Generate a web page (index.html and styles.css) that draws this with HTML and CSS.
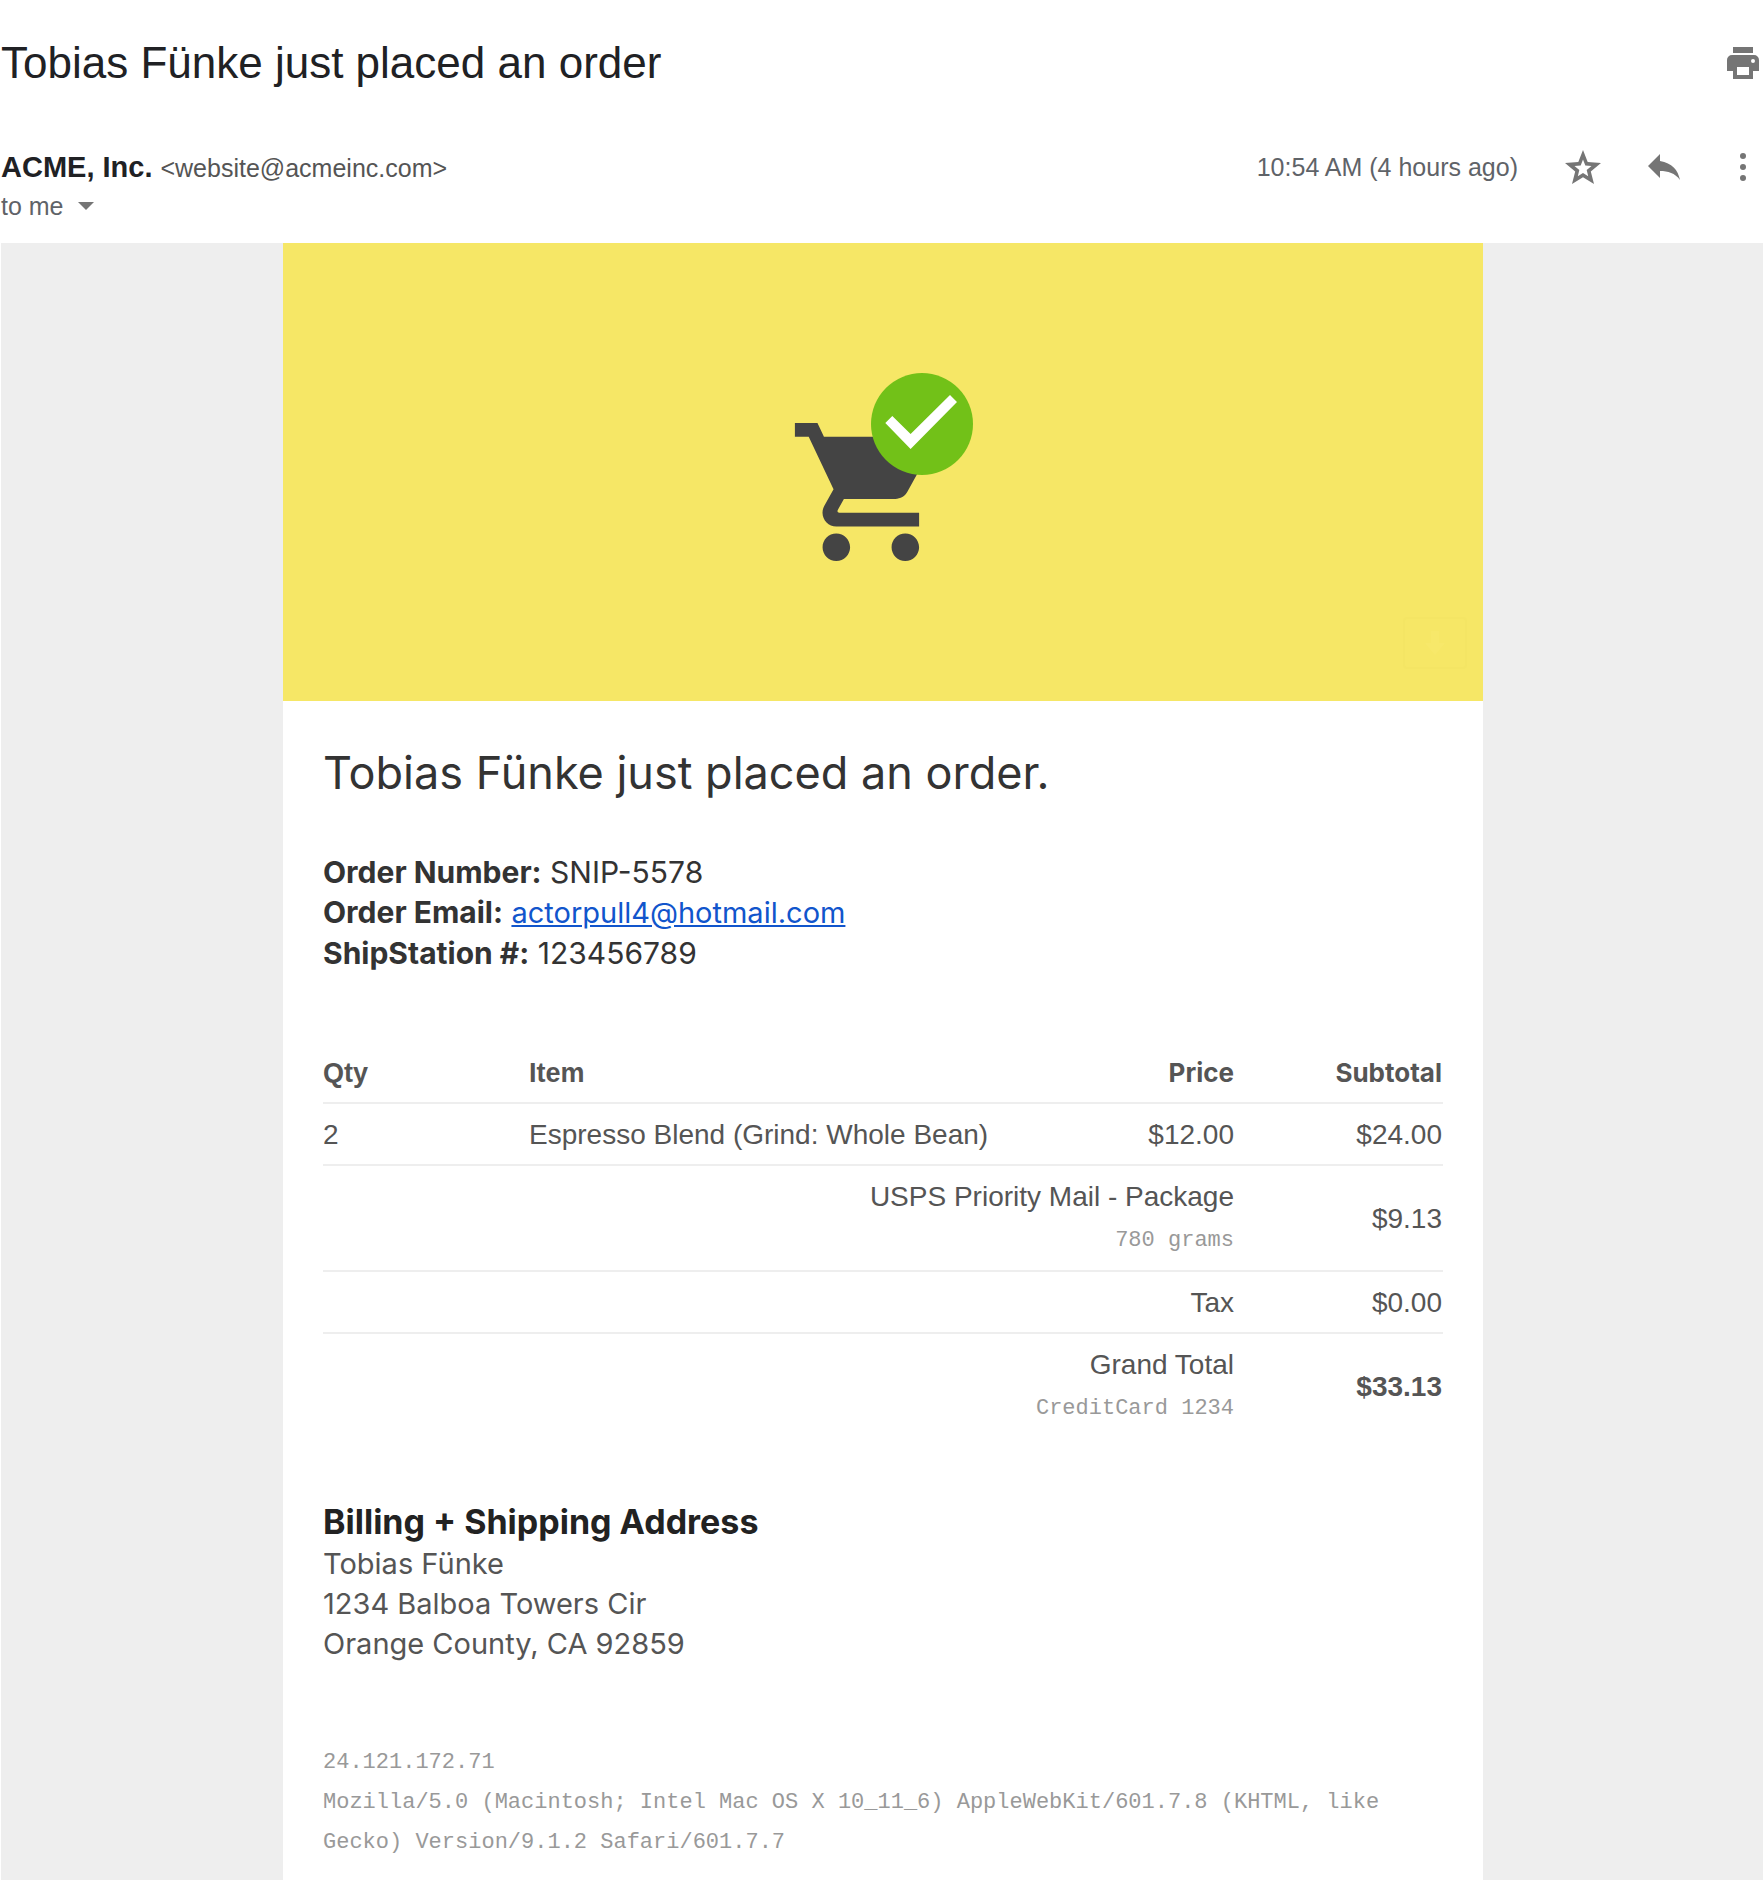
FILE: index.html
```html
<!DOCTYPE html>
<html lang="en">
<head>
<meta charset="utf-8">
<meta name="viewport" content="width=device-width, initial-scale=1">
<title>Tobias Fünke just placed an order</title>
<link rel="stylesheet" href="styles.css">
</head>
<body>
<header class="message-header">
  <div class="subject-row">
    <h1 class="subject">Tobias Fünke just placed an order</h1>
    <button class="icon-button" type="button" aria-label="Print">
      <svg width="32" height="32" viewBox="0 0 32 32" aria-hidden="true"><path fill-rule="evenodd" d="M6 0h20v6H6zM5 8h22a5 5 0 0 1 5 5v11h-6v8H6v-8H0V13a5 5 0 0 1 5-5zm5 12v8h12v-8zM26 12a2 2 0 1 0 0 4 2 2 0 0 0 0-4z"/></svg>
    </button>
  </div>
  <div class="meta-row">
    <div class="sender">
      <span class="sender-name">ACME, Inc.</span>
      <span class="sender-email">&lt;website@acmeinc.com&gt;</span>
    </div>
    <div class="actions">
      <time class="sent-at">10:54 AM (4 hours ago)</time>
      <button class="icon-button" type="button" aria-label="Star">
        <svg width="36" height="34" viewBox="0 0 36 34" aria-hidden="true"><path fill-rule="evenodd" d="M18 0l4.7 12L36 13l-10.2 8.400L29 34l-11-6.800L7 34l3.200-12.600L0 13l13.300-1zM18 9.500l-2.300 6-6.200.5 4.800 4-1.500 6.200 5.200-3.300 5.200 3.300-1.500-6.200 4.800-4-6.200-.5z"/></svg>
      </button>
      <button class="icon-button" type="button" aria-label="Reply">
        <svg width="32" height="26" viewBox="0 0 32 26" aria-hidden="true"><path d="M12 7V0L0 12l12 12v-7C20 17 27 19 32 26 30 16 24 9 12 7z"/></svg>
      </button>
      <button class="icon-button" type="button" aria-label="More">
        <svg width="32" height="28" viewBox="0 0 32 28" aria-hidden="true"><circle cx="16" cy="3" r="3"/><circle cx="16" cy="14" r="3"/><circle cx="16" cy="25" r="3"/></svg>
      </button>
    </div>
  </div>
  <button class="recipient" type="button">to me
    <svg width="16" height="8" viewBox="0 0 16 8" aria-hidden="true"><path d="M0 0h16L8 8z"/></svg>
  </button>
</header>

<main class="message-body">
  <article class="email">
    <div class="hero">
      <svg class="hero-art" width="180" height="188" viewBox="-2 0 180 188" role="img" aria-label="Order placed">
        <path fill="#444" transform="translate(-7 36.2) scale(6.9)" d="M7 18c-1.1 0-1.99.9-1.99 2S5.9 22 7 22s2-.9 2-2-.9-2-2-2zM1 2v2h2l3.6 7.59-1.35 2.45c-.16.28-.25.61-.25.96 0 1.1.9 2 2 2h12v-2H7.42c-.14 0-.25-.11-.25-.25l.03-.12.9-1.63h7.45c.75 0 1.41-.41 1.75-1.03l3.58-6.49c.08-.14.12-.31.12-.48 0-.55-.45-1-1-1H5.21l-.94-2H1zm16 16c-1.1 0-1.99.9-1.99 2s.89 2 1.99 2 2-.9 2-2-.9-2-2-2z"/>
        <circle cx="127" cy="51" r="51" fill="#72c118"/>
        <path fill="#fff" d="M90.3 50l7-7 18.3 18L155 22l7 7-46.400 47z"/>
      </svg>
      <button class="download" type="button" aria-label="Download image">
        <svg width="20" height="24" viewBox="0 0 20 24" aria-hidden="true"><path d="M6 0h8v12h6L10 24 0 12h6z"/></svg>
      </button>
    </div>
    <div class="content">
      <h2 class="headline">Tobias Fünke just placed an order.</h2>
      <p class="order-info">
        <strong>Order Number:</strong> SNIP-5578<br>
        <strong>Order Email:</strong> <a href="mailto:actorpull4@hotmail.com">actorpull4@hotmail.com</a><br>
        <strong>ShipStation #:</strong> 123456789
      </p>
      <table class="order-table">
        <colgroup><col class="col-qty"><col><col class="col-price"><col class="col-subtotal"></colgroup>
        <thead>
          <tr><th scope="col">Qty</th><th scope="col">Item</th><th scope="col" class="num">Price</th><th scope="col" class="num">Subtotal</th></tr>
        </thead>
        <tbody>
          <tr><td>2</td><td>Espresso Blend (Grind: Whole Bean)</td><td class="num">$12.00</td><td class="num">$24.00</td></tr>
          <tr><td colspan="3" class="num">USPS Priority Mail - Package<small class="note">780 grams</small></td><td class="num">$9.13</td></tr>
          <tr><td colspan="3" class="num">Tax</td><td class="num">$0.00</td></tr>
          <tr><td colspan="3" class="num">Grand Total<small class="note">CreditCard 1234</small></td><td class="num"><strong>$33.13</strong></td></tr>
        </tbody>
      </table>
      <h3 class="address-title">Billing + Shipping Address</h3>
      <address class="address">Tobias Fünke<br>1234 Balboa Towers Cir<br>Orange County, CA 92859</address>
      <p class="client-info">24.121.172.71<br>Mozilla/5.0 (Macintosh; Intel Mac OS X 10_11_6) AppleWebKit/601.7.8 (KHTML, like Gecko) Version/9.1.2 Safari/601.7.7</p>
    </div>
  </article>
</main>
</body>
</html>
```

FILE: styles.css
```css
* { box-sizing: border-box; }

body {
  margin: 0;
  min-height: 100vh;
  display: flex;
  flex-direction: column;
  background: #fff;
  color: #555;
  font-family: "Liberation Sans", Arial, sans-serif;
}

h1, h2, h3, p { margin: 0; }

button {
  padding: 0;
  border: 0;
  background: none;
  font: inherit;
  color: inherit;
  cursor: pointer;
}

svg { display: block; fill: #757575; }

/* Message header */
.message-header { padding: 36px 4px 18px 1px; }

.subject-row,
.meta-row {
  display: flex;
  align-items: center;
  justify-content: space-between;
}

.subject {
  color: #202124;
  font-size: 44px;
  font-weight: 400;
  line-height: 54px;
}

.meta-row { margin-top: 57px; height: 40px; }

.sender { display: flex; align-items: baseline; gap: 8px; }
.sender-name { color: #202124; font-size: 29px; font-weight: 700; }
.sender-email { color: #555; font-size: 25px; }

.actions { display: flex; align-items: center; gap: 47px; }
.sent-at { color: #5f6368; font-size: 25px; }

.recipient {
  display: flex;
  align-items: center;
  gap: 14px;
  height: 38px;
  color: #5f6368;
  font-size: 25px;
}

/* Email */
.message-body {
  flex: 1;
  display: flex;
  justify-content: center;
  margin-left: 1px;
  padding-left: 2px;
  background: #eee;
}

.email {
  width: 100%;
  max-width: 1200px;
  background: #fff;
  font-family: Inter, sans-serif;
}

.hero {
  position: relative;
  display: flex;
  justify-content: center;
  padding: 130px 0 140px;
  background: #f6e766;
}

.download {
  position: absolute;
  right: 16px;
  bottom: 32px;
  display: grid;
  place-items: center;
  width: 64px;
  height: 52px;
  border: 2px solid #f4e564;
  border-radius: 4px;
}
.download svg { fill: #f7e86a; }

.content { padding: 40px 40px 12px; }

.headline {
  color: #333;
  font-size: 45px;
  font-weight: 400;
  line-height: 64px;
}

.order-info {
  margin-top: 47px;
  color: #333;
  font-size: 30px;
  line-height: 40px;
}
.order-info a { color: #1155cc; font-size: 29px; }

.order-table {
  width: 100%;
  margin-top: 69px;
  border-collapse: collapse;
  table-layout: fixed;
  font-family: "Liberation Sans", Arial, sans-serif;
  font-size: 28px;
  line-height: 40px;
}
.col-qty { width: 206px; }
.col-price { width: 208px; }
.col-subtotal { width: 208px; }

.order-table th,
.order-table td { padding: 11px 1px 9px 0; text-align: left; }
.order-table th { font-size: 27px; }
.order-table tbody tr { border-top: 2px solid #eee; }
.order-table .num { text-align: right; }
.order-table th.num { font-family: Inter, sans-serif; font-size: 26px; }

.note {
  display: block;
  padding-top: 4px;
  color: #999;
  font-family: "Liberation Mono", "Courier New", monospace;
  font-size: 22px;
}

.address-title {
  margin-top: 62px;
  color: #222;
  font-size: 34px;
  font-weight: 700;
  line-height: 44px;
}
.address {
  font-size: 29px;
  font-style: normal;
  line-height: 40px;
}

.client-info {
  margin-top: 79px;
  color: #999;
  font-family: "Liberation Mono", "Courier New", monospace;
  font-size: 22px;
  line-height: 40px;
}
```
